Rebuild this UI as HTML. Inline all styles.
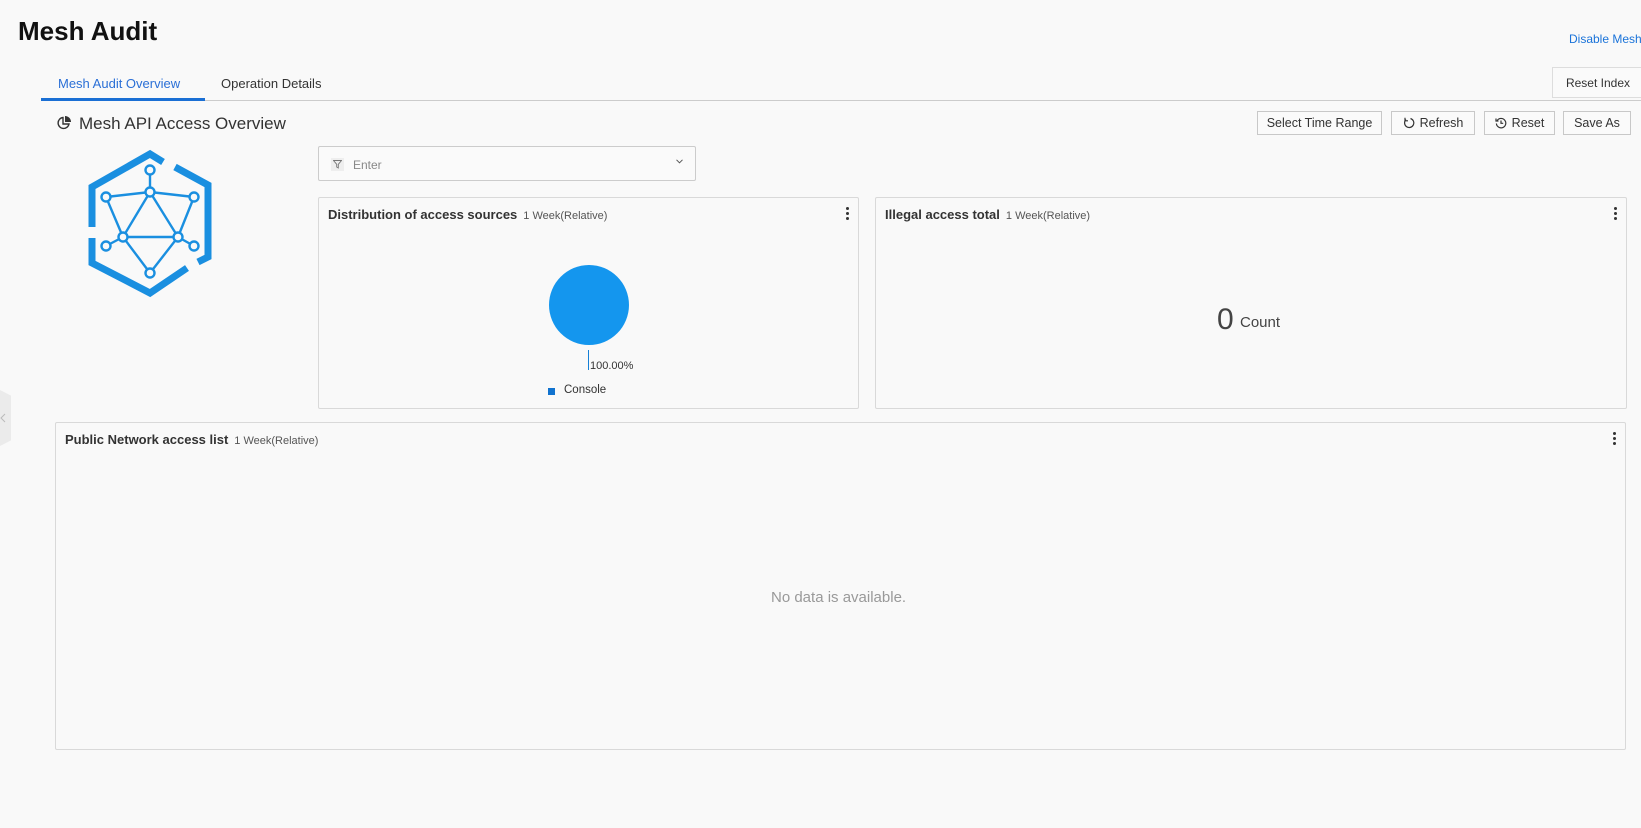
<!DOCTYPE html>
<html><head><meta charset="utf-8"><style>
*{margin:0;padding:0;box-sizing:border-box}
body{width:1641px;height:828px;background:#f9f9f9;font-family:"Liberation Sans",sans-serif;color:#333;position:relative;overflow:hidden}
.a{position:absolute;white-space:nowrap}
.btn{position:absolute;top:111px;height:24px;border:1px solid #c8c8c8;background:#fafafa;font-size:12.5px;color:#333;display:flex;align-items:center;justify-content:center;gap:5px}
.card{position:absolute;border:1px solid #d9d9d9;border-radius:2px;background:#f9f9f9}
.ct{position:absolute;left:9px;top:9px;font-size:13px;font-weight:bold;color:#333;white-space:nowrap}
.ct span{font-size:11px;font-weight:normal;color:#555;margin-left:6px}
.dots{position:absolute;right:9px;top:9px;width:3px}
.dots i{display:block;width:3px;height:3px;background:#333;border-radius:50%;margin-bottom:2px}
</style></head><body>
<div class="a" style="left:18px;top:16px;font-size:26px;font-weight:bold;color:#111">Mesh Audit</div>
<div class="a" style="left:1569px;top:32px;font-size:12px;color:#1a73d9">Disable Mesh</div>
<div class="a" style="left:58px;top:76px;font-size:13px;color:#2a6fd6">Mesh Audit Overview</div>
<div class="a" style="left:221px;top:76px;font-size:13px;color:#333">Operation Details</div>
<div class="a" style="left:41px;top:100px;width:1600px;height:1px;background:#ccc"></div>
<div class="a" style="left:41px;top:98px;width:164px;height:3px;background:#1a6fd4"></div>
<div class="a" style="left:1552px;top:67px;width:92px;height:31px;border:1px solid #ddd;background:#fafafa;font-size:12px;display:flex;align-items:center;justify-content:center">Reset Index</div>
<svg class="a" style="left:56px;top:115px" width="16" height="16" viewBox="0 0 16 16"><path d="M7 2.5A5.5 5.5 0 1 0 13 9H7Z" fill="none" stroke="#333" stroke-width="1.4"/><path d="M9 1v6h6A6 6 0 0 0 9 1Z" fill="#333"/></svg>
<div class="a" style="left:79px;top:114px;font-size:17px;color:#333">Mesh API Access Overview</div>
<div class="btn" style="left:1257px;width:125px">Select Time Range</div>
<div class="btn" style="left:1391px;width:84px"><svg width="12" height="12" viewBox="0 0 12 12"><path d="M7.5 1.5A4.6 4.6 0 1 1 3 2.6" fill="none" stroke="#333" stroke-width="1.2"/><path d="M2 0.8v3h3" fill="none" stroke="#333" stroke-width="1.2"/></svg>Refresh</div>
<div class="btn" style="left:1484px;width:71px"><svg width="12" height="12" viewBox="0 0 12 12"><path d="M2.2 3.5A4.7 4.7 0 1 1 1.4 6.5" fill="none" stroke="#333" stroke-width="1.2"/><path d="M1 1.5v2.5h2.5M6 3.5V6.3h2.2" fill="none" stroke="#333" stroke-width="1.2"/></svg>Reset</div>
<div class="btn" style="left:1563px;width:68px">Save As</div>
<svg class="a" style="left:0;top:0" width="240" height="300" viewBox="0 0 240 300">
<g fill="none" stroke="#1a8fe0" stroke-width="7" stroke-linejoin="miter">
<path d="M163 162L150 154L92 187V227"/><path d="M92 238V263L150 293L187 268"/><path d="M198 262L208 257V185L175 167"/>
</g>
<g stroke="#1a8fe0" stroke-width="2.4" fill="none">
<path d="M150 170V192M106 197L150 192L194 197M150 192L123 237L178 237L150 192M106 197L123 237M194 197L178 237M123 237L106 246M178 237L194 246M123 237L150 273L178 237"/>
</g>
<g fill="#f9f9f9" stroke="#1a8fe0" stroke-width="2.4">
<circle cx="150" cy="170" r="4.5"/><circle cx="150" cy="192" r="4.5"/><circle cx="106" cy="197" r="4.5"/><circle cx="194" cy="197" r="4.5"/><circle cx="123" cy="237" r="4.5"/><circle cx="178" cy="237" r="4.5"/><circle cx="106" cy="246" r="4.5"/><circle cx="194" cy="246" r="4.5"/><circle cx="150" cy="273" r="4.5"/>
</g></svg>
<div class="a" style="left:318px;top:146px;width:378px;height:35px;border:1px solid #ccc;border-radius:2px;background:#fafafa"></div>
<div class="a" style="left:331px;top:158px;width:13px;height:13px;background:#eee"></div>
<svg class="a" style="left:333px;top:160px" width="9" height="9" viewBox="0 0 9 9"><path d="M0.5 0.5H8.5L5.3 4.3V8L3.7 7V4.3Z" fill="none" stroke="#777" stroke-width="0.9"/></svg>
<div class="a" style="left:353px;top:158px;font-size:12px;color:#888">Enter</div>
<svg class="a" style="left:676px;top:159px" width="7" height="5" viewBox="0 0 7 5"><path d="M0.5 0.8L3.5 3.8L6.5 0.8" fill="none" stroke="#555" stroke-width="1"/></svg>
<div class="card" style="left:318px;top:197px;width:541px;height:212px">
<div class="ct">Distribution of access sources<span>1 Week(Relative)</span></div>
<div class="dots"><i></i><i></i><i></i></div>
<div class="a" style="left:230px;top:67px;width:80px;height:80px;border-radius:50%;background:#1496ee"></div>
<div class="a" style="left:269px;top:152px;width:1px;height:20px;background:#1680d6"></div>
<div class="a" style="left:271px;top:162px;font-size:11px;color:#333">100.00%</div>
<div class="a" style="left:229px;top:190px;width:7px;height:7px;background:#1173cf"></div>
<div class="a" style="left:245px;top:186px;font-size:11.5px;color:#333">Console</div>
</div>
<div class="card" style="left:875px;top:197px;width:752px;height:212px">
<div class="ct">Illegal access total<span>1 Week(Relative)</span></div>
<div class="dots"><i></i><i></i><i></i></div>
<div class="a" style="left:341px;top:105px;font-size:30px;color:#444">0</div>
<div class="a" style="left:364px;top:116px;font-size:15px;color:#444">Count</div>
</div>
<div class="card" style="left:55px;top:422px;width:1571px;height:328px">
<div class="ct">Public Network access list<span>1 Week(Relative)</span></div>
<div class="dots"><i></i><i></i><i></i></div>
<div class="a" style="left:715px;top:166px;font-size:15px;color:#999">No data is available.</div>
</div>
<div class="a" style="left:0;top:390px;width:11px;height:56px;background:#ebebeb;clip-path:polygon(0 0,100% 10%,100% 90%,0 100%)"></div>
<svg class="a" style="left:0;top:413px" width="6" height="10" viewBox="0 0 6 10"><path d="M5 1L1 5L5 9" fill="none" stroke="#bbb" stroke-width="1"/></svg>
</body></html>
